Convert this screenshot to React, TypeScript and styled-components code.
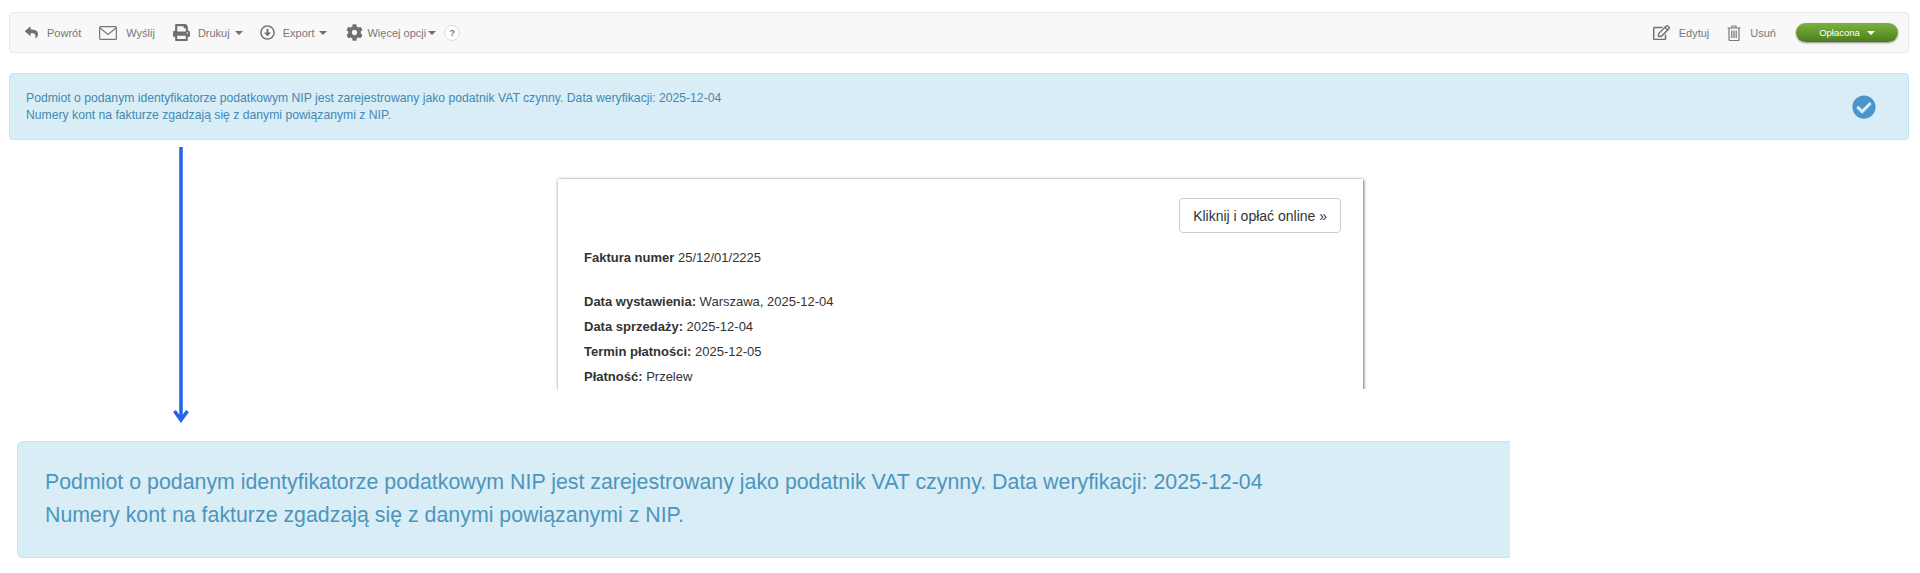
import styled, { createGlobalStyle } from "styled-components";
import {
  FaCheckCircle,
  FaCog,
  FaPrint,
  FaRegArrowAltCircleDown,
  FaRegEdit,
  FaReply,
} from "react-icons/fa";

const GlobalStyle = createGlobalStyle`
  html, body {
    margin: 0;
    padding: 0;
    background: #fff;
    font-family: "Liberation Sans", Arial, sans-serif;
  }
`;

const Page = styled.div`
  position: relative;
  width: 1920px;
  height: 573px;
  overflow: hidden;
`;

const Capture = styled.div`
  height: 389px;
  overflow: hidden;
  padding: 12px 11px 0 9px;
  box-sizing: border-box;
`;

const Toolbar = styled.div`
  display: flex;
  align-items: center;
  justify-content: space-between;
  height: 41px;
  padding: 0 10px 0 15px;
  box-sizing: border-box;
  background: #f8f8f8;
  border: 1px solid #e7e7e7;
  border-radius: 4px;
`;

const ToolGroup = styled.div`
  display: flex;
  align-items: center;
`;

const ToolItem = styled.span<{ $gap?: number; $after?: number; $before?: number }>`
  display: flex;
  align-items: center;
  gap: ${(p) => p.$gap ?? 9}px;
  margin-left: ${(p) => p.$before ?? 0}px;
  margin-right: ${(p) => p.$after ?? 18}px;
  color: #777;
  font-size: 11px;
  svg {
    flex: none;
    color: #6f6f6f;
  }
`;

const Caret = styled.i`
  width: 0;
  height: 0;
  border-top: 4px solid #6f6f6f;
  border-left: 4px solid transparent;
  border-right: 4px solid transparent;
`;

const HelpBadge = styled.span`
  display: flex;
  align-items: center;
  justify-content: center;
  width: 16px;
  height: 16px;
  margin-left: 8px;
  box-sizing: border-box;
  background: #fff;
  border: 1px solid #ddd;
  border-radius: 50%;
  color: #777;
  font-size: 9px;
  font-weight: 700;
`;

const StatusButton = styled.span`
  display: flex;
  align-items: center;
  justify-content: center;
  gap: 7px;
  width: 102px;
  height: 19px;
  margin-left: 2px;
  border-radius: 10px;
  background: linear-gradient(#7ab33e, #4b7d1c);
  box-shadow: 0 1px 2px rgba(0, 0, 0, 0.45);
  color: #fff;
  font-size: 9.5px;
  i {
    width: 0;
    height: 0;
    border-top: 4px solid #fff;
    border-left: 4px solid transparent;
    border-right: 4px solid transparent;
  }
`;

const AlertBox = styled.div`
  display: flex;
  align-items: center;
  justify-content: space-between;
  height: 67px;
  margin-top: 20px;
  padding: 0 32px 0 16px;
  box-sizing: border-box;
  background: #d9edf7;
  border: 1px solid #bce8f1;
  border-radius: 4px;
  color: #3f8ab0;
  font-size: 12.2px;
  line-height: 17px;
`;

const Invoice = styled.div`
  width: 805px;
  height: 300px;
  margin: 39px 0 0 549px;
  padding: 19px 22px 0 26px;
  box-sizing: border-box;
  background: #fff;
  box-shadow: 0 0 3px rgba(0, 0, 0, 0.25), 1px 1px 3px rgba(0, 0, 0, 0.45);
`;

const PayRow = styled.div`
  display: flex;
  justify-content: flex-end;
`;

const PayButton = styled.span`
  display: block;
  padding: 8px 13px 7px;
  background: #fff;
  border: 1px solid #ccc;
  border-radius: 4px;
  color: #333;
  font-size: 14px;
  line-height: 18px;
`;

const InvoiceNumber = styled.p`
  margin: 15px 0 24px;
  color: #333;
  font-size: 13px;
  line-height: 20px;
`;

const InfoLine = styled.p`
  margin: 0 0 5px;
  color: #333;
  font-size: 13px;
  line-height: 20px;
`;

const ArrowMark = styled.svg`
  position: absolute;
  left: 173px;
  top: 147px;
`;

const EnlargedAlert = styled.div`
  margin: 52px 0 0 17px;
  width: 1493px;
  height: 117px;
  padding: 24px 0 0 27px;
  box-sizing: border-box;
  background: #d9edf7;
  border: 1px solid #bce8f1;
  border-right: 0;
  border-radius: 6px 0 0 6px;
  color: #4d95bb;
  font-size: 21.35px;
  line-height: 33px;
`;

const EnvelopeIcon = () => (
  <svg width="18" height="14" viewBox="0 0 18 14" fill="none" stroke="#777" strokeWidth="1.2">
    <rect x="0.6" y="0.6" width="16.8" height="12.8" rx="1" />
    <path d="M1 2l8 6.5L17 2" />
  </svg>
);

const TrashIcon = () => (
  <svg width="14" height="16" viewBox="0 0 14 16" fill="none" stroke="#777" strokeWidth="1.2">
    <path d="M0.5 3h13M5 3V1h4v2M2 3v11.5a1 1 0 0 0 1 1h8a1 1 0 0 0 1-1V3" />
    <path d="M4.8 5.5v7.5M7 5.5v7.5M9.2 5.5v7.5" />
  </svg>
);

const App = () => (
  <Page>
    <GlobalStyle />
    <Capture>
      <Toolbar>
        <ToolGroup>
          <ToolItem>
            <FaReply size={13} />
            Powrót
          </ToolItem>
          <ToolItem>
            <EnvelopeIcon />
            Wyślij
          </ToolItem>
          <ToolItem $gap={8} $after={5}>
            <FaPrint size={17} />
            Drukuj
          </ToolItem>
          <Caret />
          <ToolItem $gap={8} $after={5} $before={17}>
            <FaRegArrowAltCircleDown size={15} />
            Export
          </ToolItem>
          <Caret />
          <ToolItem $gap={4} $after={2} $before={19}>
            <FaCog size={17} />
            Więcej opcji
          </ToolItem>
          <Caret />
          <HelpBadge>?</HelpBadge>
        </ToolGroup>
        <ToolGroup>
          <ToolItem>
            <FaRegEdit size={17} />
            Edytuj
          </ToolItem>
          <ToolItem>
            <TrashIcon />
            Usuń
          </ToolItem>
          <StatusButton>
            Opłacona <i />
          </StatusButton>
        </ToolGroup>
      </Toolbar>
      <AlertBox>
        <div>
          Podmiot o podanym identyfikatorze podatkowym NIP jest zarejestrowany jako podatnik VAT czynny. Data
          weryfikacji: 2025-12-04
          <br />
          Numery kont na fakturze zgadzają się z danymi powiązanymi z NIP.
        </div>
        <FaCheckCircle size={24} color="#4a96cc" />
      </AlertBox>
      <Invoice>
        <PayRow>
          <PayButton>Kliknij i opłać online »</PayButton>
        </PayRow>
        <InvoiceNumber>
          <b>Faktura numer</b> 25/12/01/2225
        </InvoiceNumber>
        <InfoLine>
          <b>Data wystawienia:</b> Warszawa, 2025-12-04
        </InfoLine>
        <InfoLine>
          <b>Data sprzedaży:</b> 2025-12-04
        </InfoLine>
        <InfoLine>
          <b>Termin płatności:</b> 2025-12-05
        </InfoLine>
        <InfoLine>
          <b>Płatność:</b> Przelew
        </InfoLine>
      </Invoice>
    </Capture>
    <EnlargedAlert>
      Podmiot o podanym identyfikatorze podatkowym NIP jest zarejestrowany jako podatnik VAT czynny. Data weryfikacji:
      2025-12-04
      <br />
      Numery kont na fakturze zgadzają się z danymi powiązanymi z NIP.
    </EnlargedAlert>
    <ArrowMark width="16" height="276" viewBox="0 0 16 276" fill="none" stroke="#2563eb">
      <path d="M8 0v272" strokeWidth="3.5" />
      <path d="M1.5 264L8 273l6.5-9" strokeWidth="3.5" />
    </ArrowMark>
  </Page>
);

export default App;
